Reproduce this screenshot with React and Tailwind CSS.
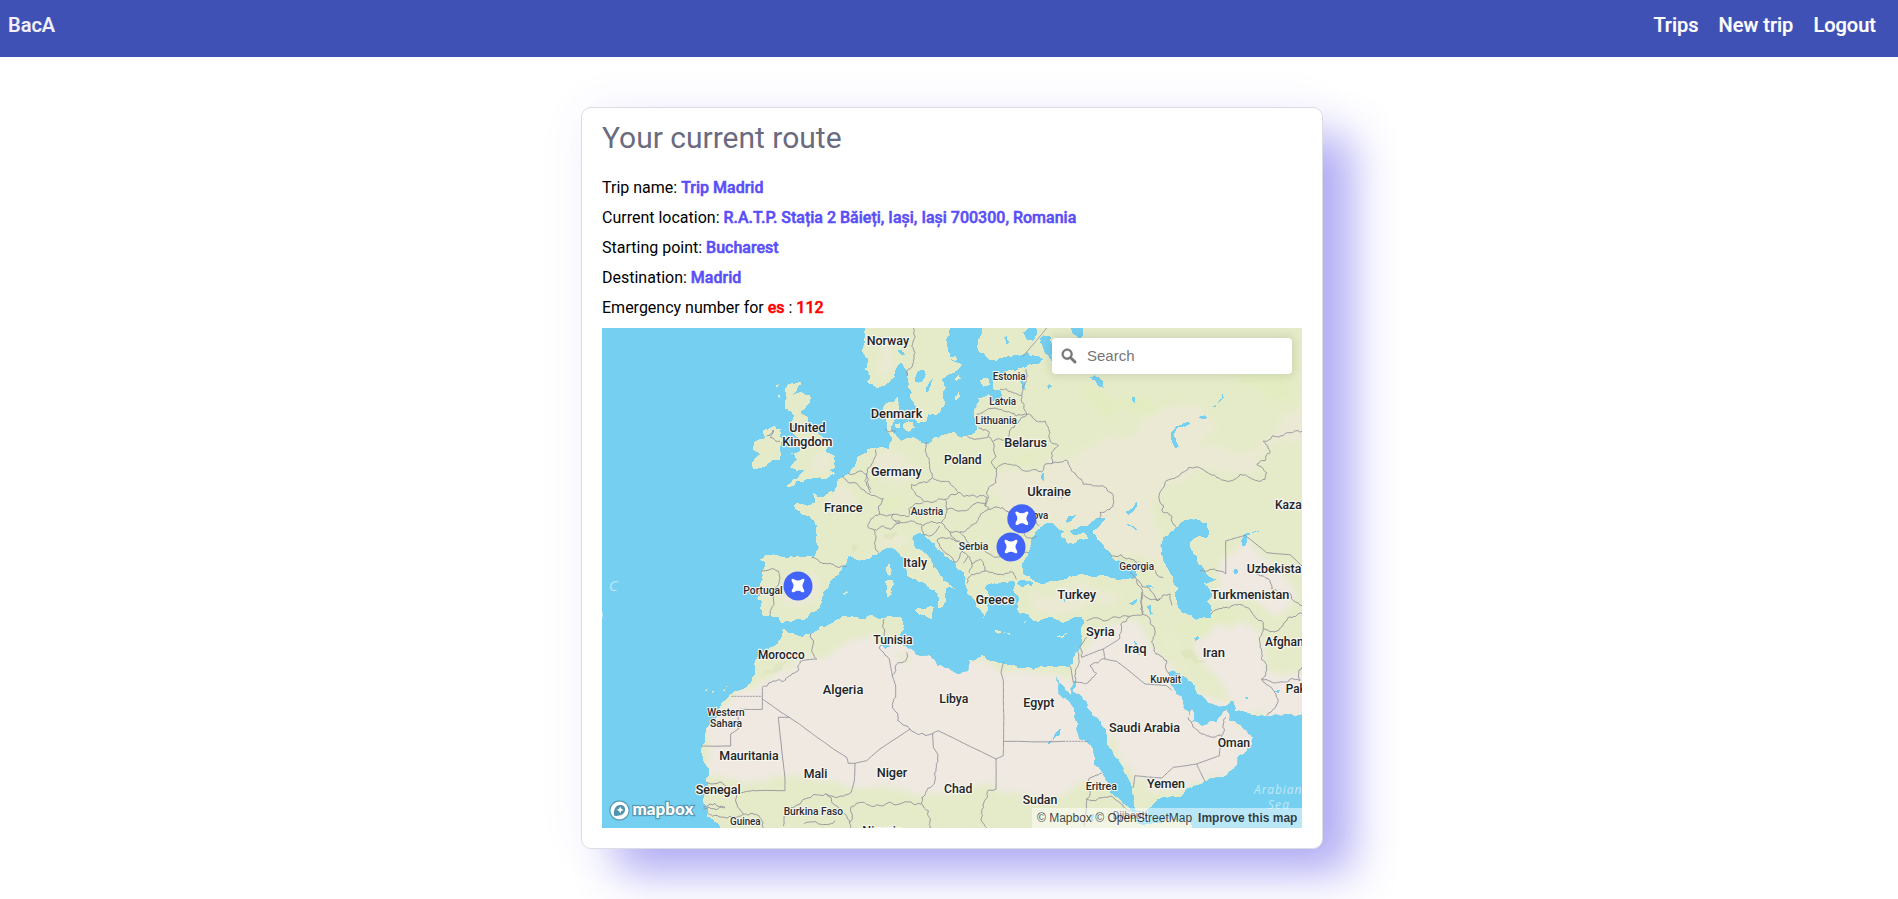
import React from "react";

/* Map geometry uses three units per pixel. */
function parse(text) {
  return text.trim().split(/\s+/).map((p) => p.split(",").map(Number));
}

/* Subdivides each segment with a small repeatable offset, so coasts look natural. */
function roughen(text, amount, closed) {
  const pts = parse(text);
  let seed = Math.round(pts[0][0] * 7 + pts[0][1] * 13) + 1;
  const rand = () => {
    seed = (seed * 16807) % 2147483647;
    return seed / 2147483647 - 0.5;
  };
  rand();
  const out = [];
  const split = (a, b) => {
    const dx = b[0] - a[0];
    const dy = b[1] - a[1];
    if (Math.hypot(dx, dy) < 7) {
      out.push(b);
      return;
    }
    const k = rand() * amount;
    const m = [(a[0] + b[0]) / 2 - dy * k, (a[1] + b[1]) / 2 + dx * k];
    split(a, m);
    split(m, b);
  };
  out.push(pts[0]);
  for (let i = 1; i < pts.length; i++) split(pts[i - 1], pts[i]);
  if (closed) split(pts[pts.length - 1], pts[0]);
  return "M" + out.map((p) => p[0].toFixed(1) + " " + p[1].toFixed(1)).join("L") + (closed ? "Z" : "");
}

const LAND = [
  /* Eurasia */
  "548,892 538,872 512,868 486,866 487,830 472,820 480,790 488,760 484,735 496,715 480,700 500,686 540,690 600,692 640,694 655,660 648,635 652,600 628,570 600,555 580,540 590,530 610,535 632,536 645,530 638,502 652,512 675,508 700,498 712,480 715,460 740,445 758,425 770,405 775,390 800,382 800,370 822,368 850,363 868,368 875,345 862,315 862,290 850,262 855,235 880,228 893,210 896,240 890,265 880,290 872,312 888,325 905,345 935,335 960,345 985,355 1000,335 1065,318 1085,335 1130,312 1122,270 1135,215 1165,205 1178,225 1195,225 1205,197 1180,190 1178,165 1182,140 1230,130 1265,125 1290,114 1318,112 1330,100 1290,92 1285,78 1230,92 1190,104 1160,95 1135,75 1135,40 1138,-10 1700,-300 2600,-300 2600,1162 2110,1162 2010,1169 1950,1162 1905,1154 1900,1124 1840,1134 1790,1104 1765,1064 1740,1042 1705,1039 1720,1084 1750,1144 1768,1170 1776,1150 1782,1170 1775,1188 1810,1199 1850,1189 1882,1149 1888,1184 1930,1209 1958,1234 1940,1274 1915,1289 1912,1314 1860,1354 1800,1374 1740,1414 1650,1444 1608,1454 1598,1384 1570,1334 1520,1254 1510,1204 1470,1154 1440,1105 1418,1096 1425,1064 1420,1066 1412,1106 1395,1089 1368,1050 1368,1024 1410,1022 1425,984 1445,934 1452,894 1445,874 1420,875 1390,892 1350,874 1315,889 1285,866 1260,864 1250,835 1258,814 1240,790 1240,764 1205,768 1170,774 1155,789 1166,808 1160,820 1165,845 1150,876 1140,850 1128,844 1118,815 1100,804 1095,764 1092,740 1065,712 1035,692 1010,670 985,640 975,630 960,620 938,640 945,665 985,690 1000,725 1018,744 1030,764 1065,789 1040,785 1035,810 1028,842 1015,846 1016,814 980,779 940,759 920,744 915,720 895,680 860,665 838,680 800,700 745,690 738,715 715,748 690,769 670,800 665,819 650,854 625,872 590,880 560,884",
  /* Africa */
  "548,909 560,915 580,922 620,924 660,900 700,889 780,879 840,879 870,869 885,874 905,876 910,914 895,940 905,955 935,970 990,989 1010,1019 1050,1030 1080,1044 1105,1034 1108,1002 1145,984 1180,1004 1210,1014 1260,1026 1300,1034 1325,1020 1368,1024 1368,1054 1405,1124 1425,1160 1435,1194 1430,1215 1465,1254 1480,1314 1515,1354 1530,1399 1560,1420 1590,1452 1595,1469 1620,1494 1680,1492 1770,1488 1775,1600 370,1600 360,1510 355,1494 320,1470 318,1440 308,1420 325,1384 328,1334 305,1264 335,1184 385,1114 430,1089 465,1044 465,1019 510,964 545,929",
  /* Norway and Sweden */
  "800,-10 795,30 790,60 805,100 795,130 812,150 800,165 830,187 860,175 885,140 895,118 905,110 918,130 925,170 935,200 948,245 952,290 975,290 985,265 1020,258 1030,210 1025,160 1040,148 1065,140 1085,115 1050,90 1040,50 1045,-10",
  /* Great Britain, Ireland */
  "565,175 605,168 590,195 580,206 630,207 625,235 600,262 625,275 630,300 665,330 680,350 680,380 705,390 705,420 690,435 705,445 680,458 640,455 610,468 595,465 580,480 560,482 580,460 612,432 570,425 590,400 572,380 600,375 597,340 580,325 575,290 582,268 555,250 560,215 555,190",
  "490,312 520,300 542,310 548,340 540,370 540,400 500,420 460,428 455,410 480,385 460,370 465,345 495,335",
  "528,180 536,175 530,190", "534,208 540,206 538,218",
  /* Mediterranean and Baltic islands */
  "862,720 872,710 875,735 868,750", "855,765 876,760 882,775 878,808 862,812 856,795",
  "945,852 975,848 1003,842 995,860 995,878 975,868 950,860", "1183,914 1205,917 1232,920 1228,926 1190,920",
  "1370,930 1402,919 1390,934 1375,934", "728,802 738,795 744,800 735,806", "908,295 925,285 940,288 945,305 925,318 912,308",
  "884,294 900,290 902,304 888,306", "1066,210 1076,198 1080,212 1068,224", "1064,160 1075,146 1082,158 1070,166",
  "1052,94 1066,90 1074,100 1058,104", "1270,888 1278,884 1276,895", "312,1096 320,1090 322,1098", "336,1094 342,1098 338,1102", "368,1094 380,1080 376,1096",
  "1140,164 1165,155 1172,175 1150,182",
];

const WATER = [
  /* Black Sea with Azov */
  "1285,685 1292,655 1302,630 1320,605 1345,590 1370,602 1392,615 1382,632 1405,645 1418,655 1438,640 1465,635 1450,618 1425,628 1410,618 1432,608 1460,600 1480,585 1515,578 1505,590 1492,608 1478,618 1490,640 1515,668 1540,700 1580,712 1605,728 1610,750 1596,760 1560,762 1530,755 1490,752 1450,744 1420,750 1380,762 1340,770 1305,766 1290,752 1270,745 1264,720",
  /* Sea of Marmara */
  "1252,772 1270,762 1300,768 1296,780 1265,784",
  /* Caspian Sea */
  "1690,634 1680,660 1690,695 1705,730 1720,762 1735,785 1728,815 1730,834 1755,862 1790,882 1834,876 1834,842 1822,826 1838,810 1822,780 1808,768 1840,765 1850,758 1815,735 1795,715 1790,690 1770,655 1780,638 1825,632 1820,592 1790,580 1750,584 1732,604 1715,616",
  /* Lakes and reservoirs */
  "1320,50 1330,28 1352,32 1360,70 1355,108 1335,85", "1410,-5 1440,-5 1450,25 1438,40 1418,25", "1270,20 1290,0 1310,10 1298,45 1278,40", "1212,35 1222,25 1228,50 1218,55",
  "1470,155 1485,148 1510,170 1512,186 1498,182", "1340,180 1350,174 1356,182 1345,188", "1596,215 1606,212 1604,230 1598,228",
  "1838,240 1862,220 1868,204 1872,216 1855,232 1842,244", "1714,340 1712,325 1730,300 1770,290 1772,294 1735,304 1722,325 1730,350 1738,364 1728,366",
  "1798,274 1815,268 1828,278 1812,280", "1326,440 1331,440 1331,464 1326,462", "1578,556 1610,528 1604,552 1586,566", "1580,596 1590,596 1612,610 1605,614",
  "1395,585 1405,570 1430,568 1420,576 1402,590", "1926,660 1928,628 1950,620 1978,610 1975,618 1940,628 1932,662", "1900,735 1912,724 1916,738 1904,745", "1372,512 1390,514 1385,518",
  "945,155 955,135 972,132 976,142 955,170 945,168", "980,198 986,172 998,160 990,182 982,200", "893,70 912,80 915,88 900,82", "1268,180 1260,165 1275,170 1278,192 1266,188",
  "1642,840 1652,838 1660,862 1652,868", "1584,830 1608,818 1612,826 1594,838", "1636,778 1648,776 1658,785 1648,784", "1602,944 1610,950 1620,975 1618,988 1606,980 1612,965",
  "1782,938 1792,930 1796,940 1786,944", "1342,1252 1362,1232 1376,1210 1385,1204 1380,1225 1362,1240 1348,1254", "1388,818 1396,820 1394,830", "1932,1112 1945,1112 1942,1122", "2022,1094 2040,1092 2034,1102", "846,958 865,956 872,962 856,968", "1472,1466 1482,1464 1482,1486 1474,1484",
];

const BORDERS = [
  "935,0 935,60 945,80 940,110 925,130 922,150", "484,735 510,730 535,735 538,750 525,785 522,835 510,866", "635,695 665,710 700,715 740,722",
  "728,450 760,470 785,490 810,505 850,518 838,565", "745,442 780,435 800,445 812,490", "828,370 822,400 805,425 800,450 812,500",
  "838,565 820,575 805,605 830,612 850,600 870,610 885,595 900,585 875,575 880,565 838,565", "822,612 828,640 825,665 835,680",
  "980,348 978,380 988,400 990,430 997,455 960,470 935,475 945,500 970,525 1000,528 1035,520 1075,500 1050,470 997,455",
  "880,565 925,572 930,545 970,530", "1035,520 1040,550 1025,590 970,600 910,590 885,585", "1075,500 1110,510 1150,508 1162,515 1155,540", "1040,550 1080,555 1115,540 1160,532",
  "1100,328 1165,332 1180,350 1188,390 1175,405 1190,430 1188,470 1160,500 1155,540", "1155,540 1168,550 1130,590 1100,610 1050,618 1025,590",
  "1168,550 1220,555 1270,548 1300,575 1318,600", "1220,555 1262,600 1285,636 1310,632", "965,600 970,625 1000,625 1020,600", "1012,640 1060,640 1085,650 1080,690 1065,710 1012,640",
  "1050,618 1080,650 1105,690 1090,712", "1105,690 1115,712 1142,700 1155,735 1115,745 1100,772", "1115,712 1108,740", "1150,670 1170,685 1230,690 1285,680", "1155,735 1200,745 1240,740 1250,760", "1080,618 1105,650 1160,672",
  "1200,190 1215,188 1240,200 1265,208", "1278,130 1268,180 1265,208 1272,240 1280,265", "1130,265 1160,252 1210,255 1250,270 1280,265",
  "1280,265 1255,290 1228,315 1225,340 1180,345", "1135,305 1165,315 1165,332", "1280,265 1335,285 1350,340 1375,360 1355,380 1358,412",
  "1188,430 1200,418 1260,425 1325,438 1335,415 1358,412 1400,402 1430,450 1450,475 1510,480 1538,505 1530,550 1500,560 1497,580",
  "2106,316 2050,328 1990,345 2010,380 1970,415 2000,440 1995,460 1950,455 1920,445 1880,465 1850,455 1815,435 1765,425 1740,445 1695,470 1678,520 1690,560 1715,570 1730,605",
  "1530,685 1595,700 1612,715 1660,728 1690,755", "1877,744 1830,730 1800,735", "1460,884 1500,879 1570,869 1628,864 1625,809 1610,764 1590,740",
  "1625,799 1628,864 1650,879 1665,914 1655,949 1700,1004 1710,1046", "1612,760 1650,789 1670,824 1710,804 1716,838", "1630,808 1650,820 1680,818", "1590,869 1562,894 1558,939",
  "1515,999 1470,1019 1490,1042 1450,1072 1425,1069", "1435,979 1438,1004 1425,1069", "1460,934 1440,964 1445,994", "1834,864 1870,844 1930,839 1985,884 1990,909",
  "1990,909 1980,964 2000,1029 1985,1059 2035,1124 2000,1169", "1985,1059 2050,1069 2100,1064 2106,1024", "1970,744 2010,764 2015,789 2106,839", "1990,909 2035,914 2065,874 2106,862",
  "1865,1229 1870,1194 1878,1174", "1765,1174 1805,1224 1865,1229", "632,924 635,974 650,999", "600,1006 595,1034 550,1066 510,1069 487,1084", "852,879 853,929 838,964 868,999", "920,979 922,994 890,1014 877,1049",
  "930,1209 978,1229 1015,1214", "887,1114 877,1144 893,1184 930,1209", "1188,1389 1165,1392 1150,1434 1145,1454 1165,1510", "1505,1342 1465,1364 1460,1419 1455,1500", "1460,1419 1510,1414 1545,1419 1590,1456",
  "320,1369 365,1369 400,1399 410,1409 410,1434 430,1464", "470,1394 430,1399 410,1409", "310,1442 345,1432 375,1444 345,1450", "310,1450 345,1449", "325,1464 430,1464 480,1474 490,1510", "755,1394 680,1404 640,1406 600,1434 555,1464 550,1500",
  "680,1404 700,1434 740,1469 750,1510", "750,1489 752,1444 790,1429 850,1439 900,1434 965,1434 985,1454 990,1510", "1013,1284 1005,1364 965,1414 965,1434", "612,1494 690,1494 705,1484", "500,330 520,312 512,335 540,345", "855,310 868,318 888,316",
];

const STRAIGHT = [
  "1340,6 1268,92", "1877,744 1877,645 1935,628 2000,680 2070,686 2106,720", "1558,939 1510,969 1445,994", "1510,969 1515,999 1550,1006 1635,1074 1700,1079 1715,1092", "1412,1022 1420,1069",
  "1865,1229 1858,1289 1790,1314 1815,1366", "1790,1314 1720,1324 1685,1356 1605,1349 1600,1384", "1210,1009 1203,1039 1210,1064 1210,1289 1188,1299 1188,1389", "1210,1246 1390,1246", "1015,1214 1188,1299",
  "650,999 615,1002 600,1006", "487,1084 487,1119 700,1269 740,1294 745,1312 765,1312 800,1304 840,1269 930,1209", "868,999 877,1049 887,1080 887,1114", "487,1119 487,1150 415,1150 415,1209 392,1224 392,1260 305,1260",
  "570,1174 535,1174 555,1364 555,1394 470,1394", "765,1312 763,1364 755,1394", "998,1222 1000,1264 1013,1284",
];

const DESERT = [
  "300,1360 320,1180 400,1110 500,1060 600,990 700,975 760,940 820,925 850,950 1000,960 1120,1000 1300,1040 1420,1070 1480,930 1600,880 1640,930 1740,1060 1780,1100 1960,1160 1960,1290 1800,1370 1640,1400 1610,1390 1540,1270 1500,1250 1540,1380 1450,1360 1380,1410 1240,1400 1160,1370 1080,1400 960,1410 840,1380 760,1390 640,1360 480,1370",
  "1790,930 1850,890 1930,890 1980,930 2000,1030 2120,1040 2130,1180 1930,1160 1860,1060 1800,1000", "1860,700 1950,630 2020,720 2090,800 2020,870 1920,820 1850,820",
];

const STEPPE = [
  "1160,480 1300,440 1420,400 1500,330 1620,290 1680,240 1800,230 1850,290 1800,360 1900,380 2000,330 2120,260 2120,360 1950,440 1800,430 1690,480 1660,600 1700,700 1560,690 1480,640 1330,600 1210,560",
  "590,750 640,730 660,790 590,850 520,800", "840,620 920,620 920,650 850,660", "640,380 700,390 690,440 620,450", "820,390 900,380 950,420 900,480 840,450", "1290,790 1420,780 1560,800 1540,850 1400,860 1300,840", "820,60 870,40 890,120 840,150", "700,470 760,490 740,560 670,540",
];

const LABELS = [
  ["Norway", 800, 56, 127], ["United", 568, 318, 109], ["Kingdom", 547, 360, 150], ["Denmark", 812, 275, 155], ["Germany", 813, 449, 152], ["France", 672, 559, 116],
  ["Italy", 910, 722, 71], ["Poland", 1032, 415, 113], ["Belarus", 1213, 364, 128], ["Ukraine", 1282, 509, 131], ["Kaza", 2025, 548, 80], ["Uzbekista", 1940, 742, 164],
  ["Tunisia", 820, 953, 118], ["Morocco", 474, 998, 140], ["Algeria", 668, 1103, 122], ["Libya", 1018, 1130, 87], ["Mauritania", 358, 1301, 178], ["Mali", 611, 1356, 71], ["Niger", 830, 1354, 92],
  ["Senegal", 287, 1403, 135], ["Nigeria", 787, 1527, 121], ["Chad", 1032, 1400, 85], ["Greece", 1127, 833, 117], ["Turkey", 1372, 820, 116], ["Syria", 1458, 930, 86], ["Iraq", 1573, 980, 67],
  ["Iran", 1808, 992, 67], ["Turkmenistan", 1833, 818, 235], ["Afghan", 1995, 960, 116], ["Pak", 2057, 1101, 60], ["Egypt", 1270, 1143, 93], ["Saudi Arabia", 1527, 1217, 213], ["Oman", 1853, 1262, 97],
  ["Yemen", 1641, 1386, 114], ["Sudan", 1268, 1434, 104],
];

const SMALL_LABELS = [
  ["Austria", 932, 566, 98], ["Estonia", 1178, 161, 99], ["Latvia", 1168, 236, 80], ["Lithuania", 1126, 293, 125], ["Moldova", 1232, 579, 113], ["Serbia", 1076, 671, 89], ["Georgia", 1558, 731, 104],
  ["Portugal", 430, 803, 118], ["Western", 322, 1169, 112], ["Sahara", 330, 1204, 96], ["Burkina Faso", 551, 1467, 178], ["Guinea", 390, 1498, 92], ["Kuwait", 1651, 1071, 92], ["Eritrea", 1457, 1391, 94], ["Djibouti", 1538, 1480, 104],
];

const landPath = LAND.map((d) => roughen(d, 0.4, true)).join("");
const waterPath = WATER.map((d) => roughen(d, 0.36, true)).join("");
const borderPath = BORDERS.map((d) => roughen(d, 0.36, false)).join("");
const straightPath = STRAIGHT.map((d) => roughen(d, 0.02, false)).join("");
const desertPath = DESERT.map((d) => roughen(d, 0.3, true)).join("");
const steppePath = STEPPE.map((d) => roughen(d, 0.5, true)).join("");

function Label({ item }) {
  return (
    <text x={item[1]} y={item[2]} textLength={item[3]} lengthAdjust="spacingAndGlyphs">
      {item[0]}
    </text>
  );
}

function Marker({ x, y }) {
  return (
    <g transform={`translate(${x} ${y})`}>
      <circle r="43.5" fill="#4264fb" />
      <path
        d="M-19 -20Q-17 -23 -13 -21Q0 -12 13 -21Q17 -23 19 -20Q20 -17 18 -13Q9 -1 18 11Q20 15 18 18Q15 20 11 18Q0 10 -11 18Q-15 20 -18 18Q-20 15 -18 11Q-9 -1 -18 -13Q-20 -17 -19 -20Z"
        fill="#fff"
      />
    </g>
  );
}

function WorldMap() {
  return (
    <svg viewBox="6 6 2100 1500" className="block h-[500px] w-[700px]">
      <defs>
        <clipPath id="land">
          <path d={landPath} />
        </clipPath>
        <filter id="soft" x="-10%" y="-10%" width="120%" height="120%">
          <feGaussianBlur stdDeviation="9" />
        </filter>
      </defs>
      <rect width="2120" height="1520" fill="#75cff0" />
      <path d={landPath} fill="#e5ebc8" shapeRendering="crispEdges" />
      <g clipPath="url(#land)">
        <g filter="url(#soft)">
          <path d={steppePath} fill="#ebe9d4" />
          <path d={desertPath} fill="#efe9e2" />
          <path
            d={[
              "1440,200 1500,190 1600,220 1720,200 1760,230 1660,260 1500,280",
              "1900,60 2100,120 2080,220 1950,180 1880,140",
              "1130,420 1180,400 1300,380 1280,420 1190,440",
              "840,520 900,500 930,540 860,560",
              "1550,700 1640,720 1660,760 1600,740",
              "1730,890 1790,900 1860,860 1940,870 1850,890 1780,930",
              "500,1040 580,990 640,960 560,1040",
            ]
              .map((d) => roughen(d, 0.6, true))
              .join("")}
            fill="#e1edbb"
            fillOpacity="0.6"
          />
          <path
            d={["1520,1240 1550,1230 1560,1300 1590,1340 1550,1320", "1600,1370 1640,1360 1640,1430 1610,1440", "1900,1180 1930,1200 1920,1220", "1660,900 1700,940 1790,1060 1840,1090 1760,1050", "880,980 930,990 920,1020"]
              .map((d) => roughen(d, 0.5, true))
              .join("")}
            fill="#e7ebcb"
          />
        </g>
        <g fill="#d8dfb4" fillOpacity="0.45">
          <path
            d={["470,1038 520,1030 560,1000 545,1030 490,1048", "850,640 880,620 900,625 870,645", "1190,650 1220,640 1260,655 1200,668", "1545,690 1600,700 1650,735 1600,722", "755,670 770,655 775,665 760,680", "1740,980 1790,990 1820,1010 1780,1005"]
              .map((d) => roughen(d, 0.7, true))
              .join("")}
          />
        </g>
      </g>
      <path d={waterPath} fill="#75cff0" shapeRendering="crispEdges" />
      <path d={roughen("1395,645 1412,628 1425,632 1435,640 1420,652 1405,654", 0.3, true)} fill="#e8ead0" shapeRendering="crispEdges" />
      <g fill="none" stroke="#94959e" strokeWidth="2.9">
        <path d={borderPath} />
        <path d={straightPath} />
        <path d="M395 1111H487M1390 1246H1466" strokeDasharray="6 3" />
      </g>
      <g className="fill-[#bfe7f8] font-['Open_Sans',sans-serif] italic">
        <text x="26" y="794" className="text-[46px]">C</text>
        <text x="1962" y="1403" textLength="142" className="text-[36px]">Arabian</text>
        <text x="2003" y="1449" textLength="64" className="text-[36px]">Sea</text>
        <path d="M6 856q6 10 0 24" />
      </g>
      <g className="fill-[#222428] stroke-[#f6f5ee] font-['Roboto',sans-serif] text-[38px] font-medium [paint-order:stroke] [stroke-linejoin:round] [stroke-width:7px]">
        {LABELS.map((item) => (
          <Label key={item[0]} item={item} />
        ))}
      </g>
      <g className="fill-[#2a2c30] stroke-[#f6f5ee] font-['Roboto',sans-serif] text-[32px] font-medium [paint-order:stroke] [stroke-linejoin:round] [stroke-width:6px]">
        {SMALL_LABELS.map((item) => (
          <Label key={item[0]} item={item} />
        ))}
      </g>
      <Marker x={1265.5} y={578} />
      <Marker x={1233} y={663} />
      <Marker x={594} y={780} />
    </svg>
  );
}

function MapboxLogo() {
  return (
    <svg viewBox="0 0 88 23" className="absolute bottom-[6px] left-[6px] h-[23px] w-[88px]">
      <g stroke="#4a8aa4" strokeWidth="2.4" strokeOpacity="0.75" className="[paint-order:stroke]">
        <circle cx="11.5" cy="11.5" r="9" fill="#fff" />
        <text x="24.5" y="15.8" textLength="61" lengthAdjust="spacingAndGlyphs" fill="#fff" className="font-['Lato',sans-serif] text-[16.5px] font-black">
          mapbox
        </text>
      </g>
      <path d="M6 16.8C5.4 12 6.6 6.4 12.4 6.1C16 6 17.6 8.8 17 11.6C16 16.4 10.4 17.4 6 16.8Z" fill="#4f93ad" />
      <path d="M12.2 7.4l1.1 2.4 2.4 1.1-2.4 1.1-1.1 2.4-1.1-2.4-2.4-1.1 2.4-1.1z" fill="#fff" />
    </svg>
  );
}

function SearchBox() {
  return (
    <div className="absolute top-[10px] right-[10px] flex h-9 w-60 items-center rounded bg-white shadow-[0_0_10px_2px_rgba(0,0,0,0.1)]">
      <svg viewBox="0 0 18 18" className="ml-[7px] h-[20px] w-[20px]" fill="#757575" stroke="#757575" strokeWidth="0.4">
        <path d="M7.4 2.5c-2.7 0-4.9 2.2-4.9 4.9s2.2 4.9 4.9 4.9c1 0 1.8-.2 2.5-.8l3.7 3.7c.2.2.4.3.8.3.7 0 1.1-.4 1.1-1.1 0-.3-.1-.5-.3-.8L11.4 10c.4-.8.8-1.6.8-2.5.1-2.8-2.1-5-4.8-5zm0 1.6c1.8 0 3.2 1.4 3.2 3.2s-1.4 3.2-3.2 3.2-3.3-1.3-3.3-3.1 1.4-3.3 3.3-3.3z" />
      </svg>
      <span className="ml-[8px] font-['Liberation_Sans',sans-serif] text-[15px] leading-5 text-[#757575]">Search</span>
    </div>
  );
}

function Row({ label, children }) {
  return (
    <p className="h-[30px] text-base leading-[30px] font-normal text-black">
      {label} {children}
    </p>
  );
}

function Value({ danger, children }) {
  return (
    <b className={danger ? "font-medium text-[#ff0000] [-webkit-text-stroke:0.5px]" : "font-medium text-[#594ef7] [-webkit-text-stroke:0.5px]"}>
      {children}
    </b>
  );
}

export default function App() {
  return (
    <div className="flex h-[899px] flex-col overflow-hidden bg-white font-['Roboto',sans-serif]">
      <header className="flex h-[57px] shrink-0 justify-between bg-[#3f51b5] pt-[10px] pr-[22px] pl-2 text-xl leading-[30px] font-medium text-white [-webkit-text-stroke:0.2px]">
        <span className="text-[#f3f0fb]">BacA</span>
        <nav className="flex gap-5">
          <a>Trips</a>
          <a>New trip</a>
          <a>Logout</a>
        </nav>
      </header>
      <main className="mt-[50px] ml-[581px] h-[742px] w-[742px] shrink-0 rounded-[10px] border border-[#dcdce2] bg-white px-5 shadow-[33px_27px_44px_-3px_rgba(90,78,230,0.46),0_0_50px_rgba(90,78,230,0.06)]">
        <h1 className="mt-[10px] h-10 text-[30px] leading-10 text-[#6b6b80]">Your current route</h1>
        <section className="mt-[15px] h-[155px]">
          <Row label="Trip name:">
            <Value>Trip Madrid</Value>
          </Row>
          <Row label="Current location:">
            <Value>R.A.T.P. Stația 2 Băieți, Iași, Iași 700300, Romania</Value>
          </Row>
          <Row label="Starting point:">
            <Value>Bucharest</Value>
          </Row>
          <Row label="Destination:">
            <Value>Madrid</Value>
          </Row>
          <Row label="Emergency number for">
            <Value danger>es</Value> : <Value danger>112</Value>
          </Row>
        </section>
        <section className="relative h-[500px] w-[700px] overflow-hidden">
          <WorldMap />
          <SearchBox />
          <MapboxLogo />
          <div className="absolute right-0 bottom-0 flex h-5 w-[270px] items-center bg-white/50 pl-[5px] font-['Liberation_Sans',sans-serif] text-xs leading-5 whitespace-pre text-black/75">
            <span>© Mapbox © OpenStreetMap</span>
            <b className="ml-[6px]">Improve this map</b>
          </div>
        </section>
      </main>
    </div>
  );
}
